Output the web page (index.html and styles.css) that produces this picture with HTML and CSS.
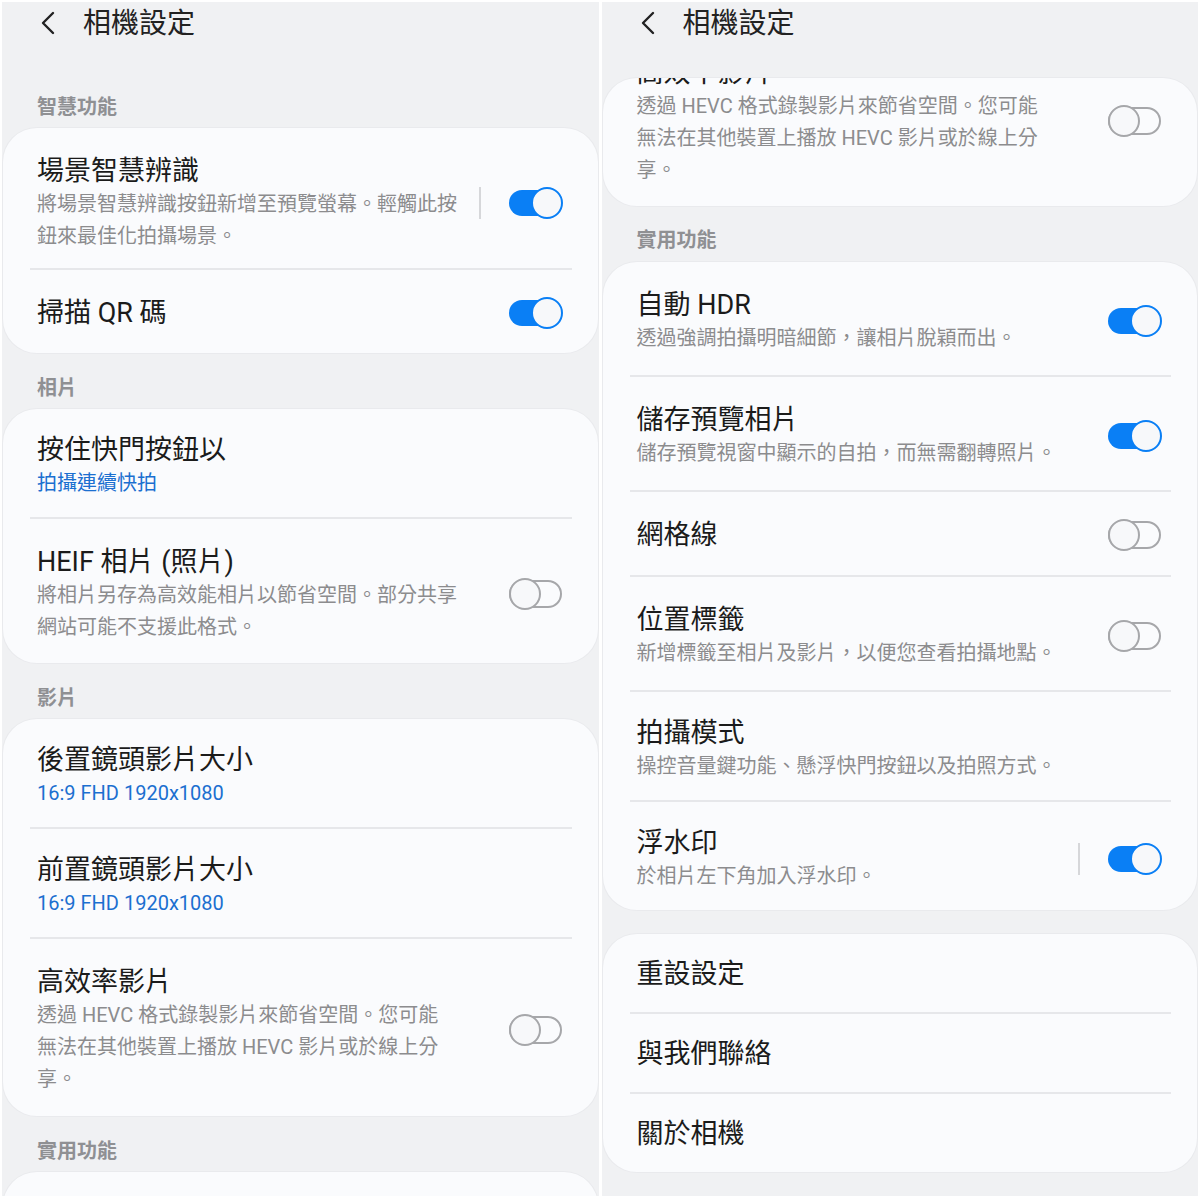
FILE: index.html
```html
<!DOCTYPE html>
<html lang="zh-Hant">
<head>
<meta charset="utf-8">
<title>相機設定</title>
<link rel="stylesheet" href="styles.css">
</head>
<body>
<div class="screens">
  <section class="panel">
    <header class="appbar">
      <svg class="back" viewBox="0 0 16 24" width="16" height="24"><polyline points="13,2 3,12 13,22" fill="none" stroke="#222" stroke-width="2.4" stroke-linecap="round" stroke-linejoin="round"/></svg>
      <h1 class="appbar-title">相機設定</h1>
    </header>

    <div class="label">智慧功能</div>
    <div class="card">
      <div class="item shift">
        <div class="text">
          <div class="title">場景智慧辨識</div>
          <div class="sub">將場景智慧辨識按鈕新增至預覽螢幕。輕觸此按<br>鈕來最佳化拍攝場景。</div>
        </div>
        <span class="vline"></span>
        <span class="toggle on"><span class="knob"></span></span>
      </div>
      <div class="divider"></div>
      <div class="item single">
        <div class="text"><div class="title">掃描 QR 碼</div></div>
        <span class="toggle on"><span class="knob"></span></span>
      </div>
    </div>

    <div class="label">相片</div>
    <div class="card">
      <div class="item">
        <div class="text">
          <div class="title">按住快門按鈕以</div>
          <div class="sub blue">拍攝連續快拍</div>
        </div>
      </div>
      <div class="divider"></div>
      <div class="item roomy">
        <div class="text">
          <div class="title">HEIF 相片 (照片)</div>
          <div class="sub">將相片另存為高效能相片以節省空間。部分共享<br>網站可能不支援此格式。</div>
        </div>
        <span class="toggle off"><span class="knob"></span></span>
      </div>
    </div>

    <div class="label">影片</div>
    <div class="card">
      <div class="item">
        <div class="text">
          <div class="title">後置鏡頭影片大小</div>
          <div class="sub blue">16:9 FHD 1920x1080</div>
        </div>
      </div>
      <div class="divider"></div>
      <div class="item">
        <div class="text">
          <div class="title">前置鏡頭影片大小</div>
          <div class="sub blue">16:9 FHD 1920x1080</div>
        </div>
      </div>
      <div class="divider"></div>
      <div class="item tall">
        <div class="text">
          <div class="title">高效率影片</div>
          <div class="sub">透過 HEVC 格式錄製影片來節省空間。您可能<br>無法在其他裝置上播放 HEVC 影片或於線上分<br>享。</div>
        </div>
        <span class="toggle off"><span class="knob"></span></span>
      </div>
    </div>

    <div class="label">實用功能</div>
    <div class="card tail"></div>
  </section>

  <section class="panel">
    <header class="appbar">
      <svg class="back" viewBox="0 0 16 24" width="16" height="24"><polyline points="13,2 3,12 13,22" fill="none" stroke="#222" stroke-width="2.4" stroke-linecap="round" stroke-linejoin="round"/></svg>
      <h1 class="appbar-title">相機設定</h1>
    </header>

    <div class="card clipped">
      <div class="item scrolled">
        <div class="text">
          <div class="title">高效率影片</div>
          <div class="sub">透過 HEVC 格式錄製影片來節省空間。您可能<br>無法在其他裝置上播放 HEVC 影片或於線上分<br>享。</div>
        </div>
        <span class="toggle off"><span class="knob"></span></span>
      </div>
    </div>

    <div class="label right">實用功能</div>
    <div class="card">
      <div class="item tall">
        <div class="text">
          <div class="title">自動 HDR</div>
          <div class="sub">透過強調拍攝明暗細節，讓相片脫穎而出。</div>
        </div>
        <span class="toggle on"><span class="knob"></span></span>
      </div>
      <div class="divider"></div>
      <div class="item tall">
        <div class="text">
          <div class="title">儲存預覽相片</div>
          <div class="sub">儲存預覽視窗中顯示的自拍，而無需翻轉照片。</div>
        </div>
        <span class="toggle on"><span class="knob"></span></span>
      </div>
      <div class="divider"></div>
      <div class="item single">
        <div class="text"><div class="title">網格線</div></div>
        <span class="toggle off"><span class="knob"></span></span>
      </div>
      <div class="divider"></div>
      <div class="item tall">
        <div class="text">
          <div class="title">位置標籤</div>
          <div class="sub">新增標籤至相片及影片，以便您查看拍攝地點。</div>
        </div>
        <span class="toggle off"><span class="knob"></span></span>
      </div>
      <div class="divider"></div>
      <div class="item">
        <div class="text">
          <div class="title">拍攝模式</div>
          <div class="sub">操控音量鍵功能、懸浮快門按鈕以及拍照方式。</div>
        </div>
      </div>
      <div class="divider"></div>
      <div class="item">
        <div class="text">
          <div class="title">浮水印</div>
          <div class="sub">於相片左下角加入浮水印。</div>
        </div>
        <span class="vline"></span>
        <span class="toggle on"><span class="knob"></span></span>
      </div>
    </div>

    <div class="card gap-top">
      <div class="item single compact">
        <div class="text"><div class="title">重設設定</div></div>
      </div>
      <div class="divider"></div>
      <div class="item single compact">
        <div class="text"><div class="title">與我們聯絡</div></div>
      </div>
      <div class="divider"></div>
      <div class="item single compact">
        <div class="text"><div class="title">關於相機</div></div>
      </div>
    </div>
  </section>
</div>
</body>
</html>
```
FILE: styles.css
```css
html, body {
  margin: 0;
  padding: 0;
  background: #ffffff;
}

body {
  font-family: Roboto, "Noto Sans CJK TC", "Noto Sans", sans-serif;
  color: #1f1f1f;
}

.screens {
  display: flex;
  gap: 3px;
  padding: 2px 2px 0 2px;
  height: 1194px;
}

.panel {
  flex: 1;
  background: #f0f1f3;
  overflow: hidden;
  display: flex;
  flex-direction: column;
}

.appbar {
  height: 70px;
  flex-shrink: 0;
  display: flex;
  align-items: flex-start;
  padding-left: 38px;
  box-sizing: border-box;
}

.back {
  margin-top: 9px;
  flex-shrink: 0;
}

.appbar-title {
  margin: 2px 0 0 27px;
  font-size: 28px;
  font-weight: 400;
  line-height: 40px;
  color: #222;
}

.label {
  height: 56px;
  box-sizing: border-box;
  padding: 21px 0 0 35px;
  font-size: 20px;
  line-height: 28px;
  font-weight: 700;
  color: #8f9093;
  flex-shrink: 0;
}

.label.right {
  padding-top: 20px;
}

.card {
  background: #fafbfd;
  border-radius: 34px;
  margin: 0 1px;
  box-shadow: 0 0 0 1px #e9eaed;
  flex-shrink: 0;
}

.card.tail {
  height: 80px;
}

.card.clipped {
  margin-top: 6px;
  overflow: hidden;
}

.card.gap-top {
  margin-top: 24px;
}

.item {
  display: flex;
  align-items: center;
  padding: 24px 36px 18px 34px;
}

.item.shift {
  padding-top: 26px;
  padding-bottom: 16px;
}

.item.roomy {
  padding-top: 26px;
  padding-bottom: 20px;
}

.item.tall {
  padding-top: 26px;
  padding-bottom: 21px;
}

.item.single {
  padding-top: 26px;
  padding-bottom: 23px;
}

.item.single.compact {
  padding-top: 23px;
  padding-bottom: 21px;
}

.item.scrolled {
  padding-top: 0;
  padding-bottom: 20px;
  margin-top: -22px;
}

.text {
  flex: 1;
  min-width: 0;
}

.title {
  font-size: 27px;
  line-height: 34px;
  color: #1b1b1b;
  white-space: nowrap;
}

.sub {
  font-size: 20px;
  line-height: 32px;
  color: #8c8c8e;
  white-space: nowrap;
}

.sub.blue {
  color: #1b6fd0;
}

.divider {
  height: 2px;
  background: #e6e7ea;
  margin: 0 26px 0 27px;
}

.vline {
  width: 2px;
  height: 32px;
  background: #d6d7da;
  margin-right: 28px;
  flex-shrink: 0;
}

.toggle {
  width: 53px;
  box-sizing: border-box;
  display: flex;
  align-items: center;
  flex-shrink: 0;
  border-radius: 15px;
}

.toggle.on {
  height: 26px;
  background: #0a7ff5;
  justify-content: flex-end;
}

.toggle.off {
  height: 28px;
  border: 2px solid #a6a7aa;
  justify-content: flex-start;
}

.knob {
  width: 32px;
  height: 32px;
  box-sizing: border-box;
  border-radius: 50%;
  background: #f7f8fa;
  flex-shrink: 0;
}

.toggle.on .knob {
  border: 2px solid #0a7ff5;
  margin-right: -1px;
}

.toggle.off .knob {
  border: 2px solid #a6a7aa;
  margin-left: -2px;
}
```
